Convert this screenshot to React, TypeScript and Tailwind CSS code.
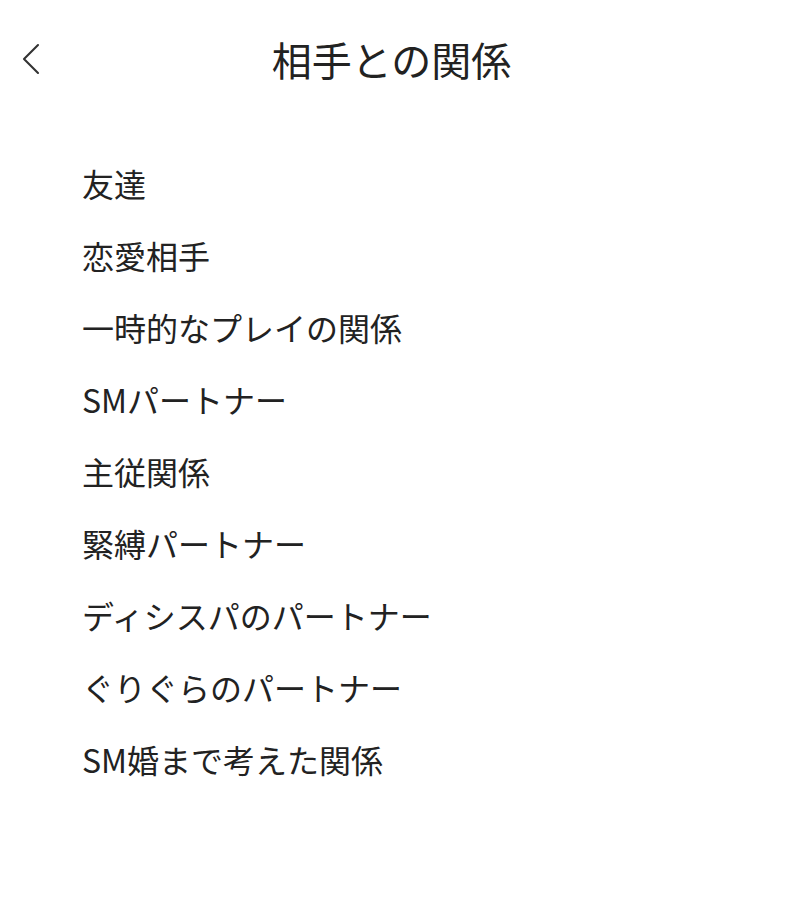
import { ChevronLeft } from "lucide-react";

const items = [
  "友達",
  "恋愛相手",
  "一時的なプレイの関係",
  "SMパートナー",
  "主従関係",
  "緊縛パートナー",
  "ディシスパのパートナー",
  "ぐりぐらのパートナー",
  "SM婚まで考えた関係",
];

export default function App() {
  return (
    <div
      className="min-h-screen w-full bg-white text-[#222222]"
      style={{ fontFamily: '"Noto Sans CJK JP", "Noto Sans", sans-serif' }}
    >
      {/* Header */}
      <div className="relative flex h-[124px] items-center justify-center pb-[6px]">
        <button className="absolute left-[3px] top-[31px] text-[#333333]" aria-label="戻る">
          <ChevronLeft size={56} strokeWidth={0.9} />
        </button>
        <h1 className="pr-[5px] text-[40px] font-normal leading-none">相手との関係</h1>
      </div>

      {/* Options */}
      <ul className="flex flex-col pt-[23px]">
        {items.map((label) => (
          <li
            key={label}
            className="flex h-[72px] items-center pl-[82px] text-[32px] leading-none"
          >
            {label}
          </li>
        ))}
      </ul>
    </div>
  );
}
